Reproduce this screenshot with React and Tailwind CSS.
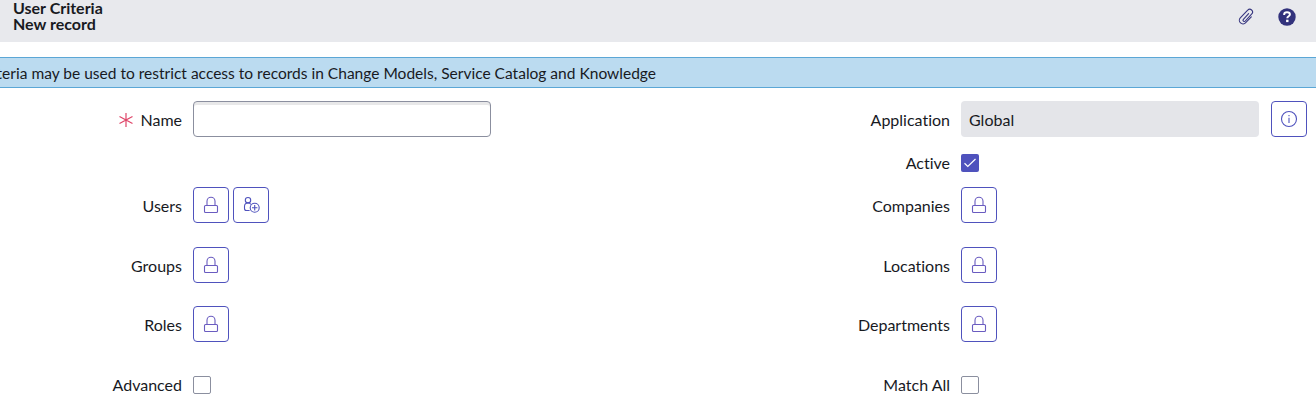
function LockIcon() {
  return (
    <svg width="16" height="18" viewBox="0 0 16 18" fill="none" stroke="#6a5cc0" strokeWidth="1.1">
      <rect x="1.5" y="9.5" width="13" height="7" rx="1" />
      <path d="M4 9.5V5.2a4 4 0 0 1 8 0v4.3" />
    </svg>
  );
}

function AddUserIcon() {
  return (
    <svg width="17" height="18" viewBox="0 0 17 18" fill="none" stroke="#4f52bd" strokeWidth="1.1">
      <circle cx="5" cy="4.2" r="2.7" />
      <path d="M6.6 14.5H3.4c-1.2 0-1.9-.8-1.9-2v-2.1C1.5 8.4 3 7 5 7c1.3 0 2.4.5 3 1.4" />
      <circle cx="11.7" cy="11.7" r="4.5" />
      <path d="M11.7 9v5.4M9 11.7h5.4" />
    </svg>
  );
}

function InfoIcon() {
  return (
    <svg width="18" height="18" viewBox="0 0 18 18" fill="none" stroke="#4f52bd" strokeWidth="1.1">
      <circle cx="9" cy="9" r="7.5" />
      <path d="M9 7.8v5.2M9 5v1.3" />
    </svg>
  );
}

function PaperclipIcon() {
  return (
    <svg width="16" height="18" viewBox="0 0 16 18" fill="none" stroke="#36357f" strokeWidth="1.1" strokeLinecap="round">
      <path d="M10.6 5.6 5.4 11.3a1.25 1.25 0 0 0 1.9 1.7l6.5-7.1a2.75 2.75 0 0 0-4.1-3.7L2.3 9.8a3.6 3.6 0 0 0 5.4 4.9l5.6-5.9" />
    </svg>
  );
}

function HelpIcon() {
  return (
    <svg width="18" height="18" viewBox="0 0 18 18" fill="none">
      <circle cx="9" cy="9" r="8.7" fill="#32327c" />
      <path d="M6.2 7V6.3c0-1.4 1.1-2 2.8-2s2.9.7 2.9 2.2c0 1.8-2.6 1.7-2.6 3.7" stroke="#fff" strokeWidth="2" />
      <rect x="8.1" y="11.7" width="2.4" height="2.4" fill="#fff" />
    </svg>
  );
}

function RequiredIcon() {
  return (
    <svg width="14" height="14" viewBox="0 0 14 14" stroke="#df4568" strokeWidth="1.2" fill="none">
      <path d="M7 0v14M.5 3.4l13 7.2M13.5 3.4l-13 7.2" />
    </svg>
  );
}

function IconButton({ label, children }) {
  return (
    <button aria-label={label} className="flex size-9 shrink-0 items-center justify-center rounded-[4px] border border-[#4f52bd] bg-white">
      {children}
    </button>
  );
}

function Checkbox({ checked }) {
  return (
    <span
      role="checkbox"
      aria-checked={!!checked}
      className={
        checked
          ? "flex size-[18px] items-center justify-center rounded-[2px] bg-[#4f52bd]"
          : "size-[18px] rounded-[2px] border border-[#8b8f9f] bg-white"
      }
    >
      {checked && (
        <svg width="14" height="12" viewBox="0 0 14 12" fill="none" stroke="#fff" strokeWidth="1.2">
          <path d="m1.5 6.3 3.3 3.2L12.5 2" />
        </svg>
      )}
    </span>
  );
}

function Field({ label, required, className = "h-9", labelClass = "pt-px", children }) {
  return (
    <div className={"flex items-center gap-[11px] " + className}>
      <div className={"flex h-5 w-[182px] items-center justify-end gap-[7px] " + labelClass}>
        {required && <RequiredIcon />}
        <label className="whitespace-nowrap">{label}</label>
      </div>
      <div className="flex items-center gap-1">{children}</div>
    </div>
  );
}

export default function App() {
  return (
    <div className="h-[416px] w-full overflow-hidden bg-white font-[Lato,sans-serif] text-[16px] leading-5 text-[#181a1f] [font-variant-ligatures:none]">
      <header className="flex h-[42px] justify-between bg-[#e8e9ed] pl-[13px] pr-5">
        <h1 className="text-[16px] font-bold leading-4">
          <span className="block">User Criteria</span>
          <span className="block">New record</span>
        </h1>
        <div className="flex items-start gap-6 pt-2">
          <PaperclipIcon />
          <HelpIcon />
        </div>
      </header>

      <div className="mt-[15px] h-[31px] border-y border-[#5ba7d6] bg-[#bbdbf0]">
        <p className="flex h-full w-[656px] items-center justify-end overflow-hidden whitespace-nowrap pt-px text-[15.54px]">
          criteria may be used to restrict access to records in Change Models, Service Catalog and Knowledge
        </p>
      </div>

      <main className="flex pt-[13px]">
        <section className="w-[768px]">
          <Field label="Name" required>
            <input
              aria-label="Name"
              className="h-9 w-[298px] rounded-[4px] border border-[#8b8f9f] bg-white px-2 shadow-[inset_0_3px_0_#e8e8e9]"
            />
          </Field>
          <Field label="Users" className="mt-[50px] h-9">
            <IconButton label="Unlock users"><LockIcon /></IconButton>
            <IconButton label="Add me"><AddUserIcon /></IconButton>
          </Field>
          <Field label="Groups" className="mt-6 h-9">
            <IconButton label="Unlock groups"><LockIcon /></IconButton>
          </Field>
          <Field label="Roles" className="mt-[23px] h-9">
            <IconButton label="Unlock roles"><LockIcon /></IconButton>
          </Field>
          <Field label="Advanced" className="mt-[34px] h-[18px]" labelClass="pb-px">
            <Checkbox />
          </Field>
        </section>

        <section>
          <Field label="Application">
            <div className="mr-2 flex h-9 w-[298px] items-center rounded-[4px] bg-[#e4e5e9] px-2 pt-px">Global</div>
            <IconButton label="Application details"><InfoIcon /></IconButton>
          </Field>
          <Field label="Active" className="mt-[17px] h-[18px]" labelClass="pb-px">
            <Checkbox checked />
          </Field>
          <Field label="Companies" className="mt-[15px] h-9">
            <IconButton label="Unlock companies"><LockIcon /></IconButton>
          </Field>
          <Field label="Locations" className="mt-6 h-9">
            <IconButton label="Unlock locations"><LockIcon /></IconButton>
          </Field>
          <Field label="Departments" className="mt-[23px] h-9">
            <IconButton label="Unlock departments"><LockIcon /></IconButton>
          </Field>
          <Field label="Match All" className="mt-[34px] h-[18px]" labelClass="pb-px">
            <Checkbox />
          </Field>
        </section>
      </main>
    </div>
  );
}
